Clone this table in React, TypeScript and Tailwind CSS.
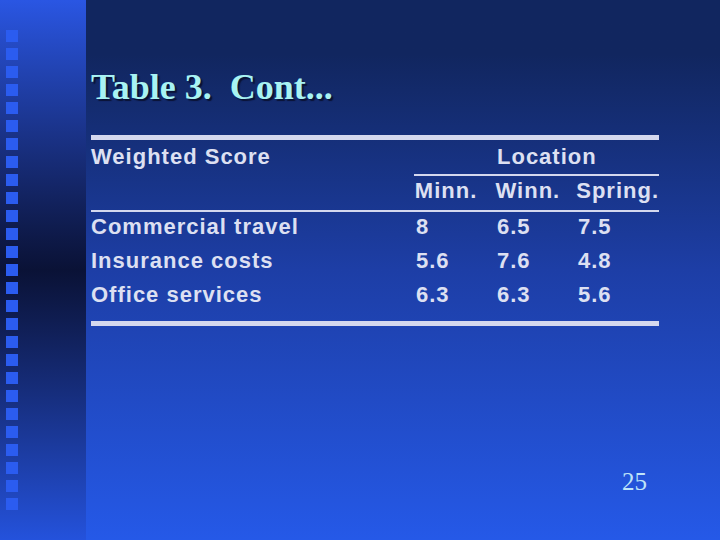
const sans = { fontFamily: '"Liberation Sans", Arial, sans-serif' };

const rows = [
  ["Commercial travel", "8", "6.5", "7.5"],
  ["Insurance costs", "5.6", "7.6", "4.8"],
  ["Office services", "6.3", "6.3", "5.6"],
];

function Strip() {
  const squares = Array.from({ length: 27 });
  return (
    <div className="w-[86px] shrink-0 h-full flex flex-col gap-[6px] pt-[30px] pl-[6px] bg-linear-to-b from-[#2a56e3] via-[#0a1236] to-[#2452dc]">
      {squares.map((_, i) => (
        <div key={i} className="w-[12px] h-[12px] shrink-0 bg-[#2b5cf0]" />
      ))}
    </div>
  );
}

export default function App() {
  return (
    <div className="w-[720px] h-[540px] flex overflow-hidden">
      <Strip />

      <div className="flex-1 min-w-0 flex flex-col pl-[5px] pr-[61px] bg-linear-to-b from-[#11265f] from-10% via-[#1d3ea6] to-[#2559e8]">
        {/* title */}
        <h1
          className="mt-[69px] text-[36px] leading-[36px] font-bold text-[#a8f3f3] [text-shadow:2px_2px_1px_#0a1234]"
          style={{ fontFamily: '"Liberation Serif", "Times New Roman", serif' }}
        >
          Table 3.&nbsp; Cont...
        </h1>

        <div className="mt-[30px] h-[5px] bg-[#d4d8ee]" />

        <div className="text-[22px] leading-[30px] font-bold tracking-[1px] text-[#dde0f2]" style={sans}>
          {/* header row 1 */}
          <div className="flex">
            <div className="w-[325px] pt-[2px]">Weighted Score</div>
            <div className="flex-1 pt-[2px] pb-[2px] border-b-2 border-[#d4d8ee] -ml-[2px] pl-[83px]">Location</div>
          </div>
          {/* header row 2 */}
          <div className="flex pb-[4px] border-b-2 border-[#d4d8ee]">
            <div className="w-[325px]" />
            <div className="w-[81px]">Minn.</div>
            <div className="w-[81px]">Winn.</div>
            <div className="flex-1 whitespace-nowrap">Spring.</div>
          </div>
          {rows.map((r) => (
            <div key={r[0]} className="flex pb-[4px]">
              <div className="w-[325px]">{r[0]}</div>
              <div className="w-[81px]">{r[1]}</div>
              <div className="w-[81px]">{r[2]}</div>
              <div className="flex-1">{r[3]}</div>
            </div>
          ))}
        </div>

        <div className="mt-[7px] h-[5px] bg-[#d4d8ee]" />

        <div
          className="mt-[144px] flex justify-end pr-[12px] text-[25px] leading-[24px] text-[#bfe4f8]"
          style={{ fontFamily: '"Liberation Serif", "Times New Roman", serif' }}
        >
          25
        </div>
      </div>
    </div>
  );
}
